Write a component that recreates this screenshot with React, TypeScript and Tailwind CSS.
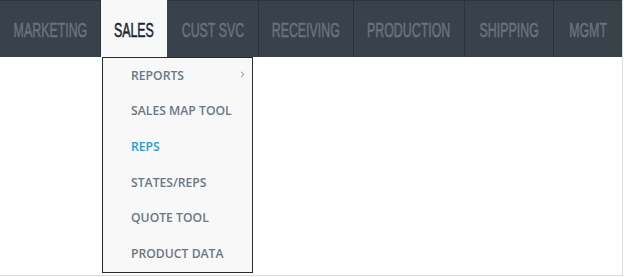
import React from "react";

const tabs = [
  { label: "MARKETING", w: "w-[101px]" },
  { label: "SALES", w: "w-[66px]", active: true },
  { label: "CUST SVC", w: "w-[92px]" },
  { label: "RECEIVING", w: "w-[95px]" },
  { label: "PRODUCTION", w: "w-[111px]" },
  { label: "SHIPPING", w: "w-[89px]" },
  { label: "MGMT", w: "w-[68px]" },
];

const items = [
  { label: "REPORTS", sub: true },
  { label: "SALES MAP TOOL" },
  { label: "REPS", active: true },
  { label: "STATES/REPS" },
  { label: "QUOTE TOOL" },
  { label: "PRODUCT DATA" },
];

export default function App() {
  return (
    <div className="w-[623px] h-[276px] bg-white">
      <div className="relative w-[623px] h-[276px] border-r border-b border-[#dcdcdc] bg-white">
        <nav className="flex h-[57px] w-[622px] bg-[#39414a] border-t border-[#2e353c]">
          {tabs.map((t, i) => (
            <div
              key={t.label}
              className={`${t.w} relative flex items-center justify-center shrink-0 overflow-visible ${
                i < tabs.length - 1 ? "border-r border-[#2c3239]" : ""
              } ${t.active ? "bg-[#f8f8f8] border-r-0 -mt-px" : ""}`}
            >
              <span
                className={`inline-block whitespace-nowrap scale-x-[0.59] text-[21px] font-normal leading-none pt-[1px] [-webkit-text-stroke:0.55px_currentColor] ${
                  t.active ? "text-[#1b2431]" : "text-[#67737f]"
                }`}
                style={{ fontFamily: '"Liberation Sans", Arial, sans-serif' }}
              >
                {t.label}
              </span>
            </div>
          ))}
        </nav>
        <div
          className="absolute left-[102px] top-[57px] w-[151px] border border-[#2a2a2a] bg-[#f8f8f8]"
          style={{ fontFamily: '"Open Sans", sans-serif' }}
        >
          {items.map((it) => (
            <div key={it.label} className="relative flex h-[35.67px] items-center pl-[28px]">
              <span
                className={`text-[12.2px] font-semibold leading-none ${
                  it.active ? "text-[#2a9ccc]" : "text-[#6b7783]"
                }`}
              >
                {it.label}
              </span>
              {it.sub && (
                <svg
                  className="absolute right-[7px] top-[13px]"
                  width="5"
                  height="7"
                  viewBox="0 0 5 7"
                  fill="none"
                >
                  <path d="M1 0.8 L4 3.5 L1 6.2" stroke="#7c8792" strokeWidth="1" />
                </svg>
              )}
            </div>
          ))}
        </div>
      </div>
    </div>
  );
}
